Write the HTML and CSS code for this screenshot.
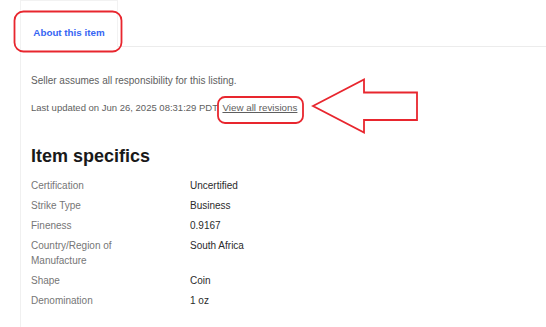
FILE: index.html
```html
<!DOCTYPE html>
<html>
	<head>
		<meta charset="UTF-8">
		<title>About this item</title>
		<link rel="stylesheet" href="styles.css">
	</head>
	<body>
		<div class="page">
			<div class="tabs">
				<div class="tab tab-active">About this item</div>
				<div class="tab-rest"></div>
			</div>
			<div class="panel">
				<p class="note">Seller assumes all responsibility for this listing.</p>
				<p class="note updated">Last updated on Jun 26, 2025 08:31:29 PDT <a href="javascript:void(0)">View all revisions</a></p>

				<h2 class="specs-title">Item specifics</h2>
				<dl class="specs">
					<div class="spec-row"><dt>Certification</dt><dd>Uncertified</dd></div>
					<div class="spec-row"><dt>Strike Type</dt><dd>Business</dd></div>
					<div class="spec-row"><dt>Fineness</dt><dd>0.9167</dd></div>
					<div class="spec-row"><dt>Country/Region of Manufacture</dt><dd>South Africa</dd></div>
					<div class="spec-row"><dt>Shape</dt><dd>Coin</dd></div>
					<div class="spec-row"><dt>Denomination</dt><dd>1 oz</dd></div>
				</dl>
			</div>

			<!-- red markup drawn over the screenshot -->
			<svg class="marks" width="546" height="327" viewBox="0 0 546 327">
				<rect x="14.5" y="11.5" width="107" height="40" rx="9" ry="9" />
				<rect x="218" y="97" width="85" height="26" rx="7" ry="7" />
				<polygon points="313,106 364,79.5 364,92.5 417,92.5 417,120 364,120 364,132.5" />
			</svg>
		</div>
	</body>
</html>
```

FILE: styles.css
```css
* {
	margin: 0;
	padding: 0;
	box-sizing: border-box;
}

body {
	background: #fff;
	font-family: "Liberation Sans", Arial, sans-serif;
	color: #191919;
}

.page {
	position: relative;
	width: 546px;
	height: 327px;
	overflow: hidden;
}

.tabs {
	display: flex;
	height: 47px;
	padding-left: 20px;
}

.tab {
	width: 98px;
	padding-top: 26px;
	text-align: center;
	font-size: 9.8px;
	font-weight: bold;
	color: #3665f3;
	border: 1px solid #f2f2f2;
	border-bottom: none;
}

.tab-rest {
	flex: 1;
	border-bottom: 1px solid #ececec;
}

.panel {
	margin-left: 20px;
	height: 280px;
	border-left: 1px solid #f0f0f0;
	padding: 28px 0 0 10px;
}

.note {
	font-size: 10px;
	line-height: 12px;
	color: #5e5e5e;
}

.updated {
	margin-top: 15px;
	font-size: 9.5px;
}

.updated a {
	margin-left: 2px;
	font-size: 9.8px;
	color: #5e5e5e;
	text-decoration: underline;
}

.specs-title {
	margin-top: 31px;
	font-size: 18px;
	line-height: 22px;
	font-weight: bold;
	color: #191919;
}

.specs {
	margin-top: 11px;
	display: flex;
	flex-direction: column;
	gap: 5px;
}

.spec-row {
	display: flex;
	font-size: 10px;
	line-height: 15px;
}

.spec-row dt {
	width: 130px;
	margin-right: 29px;
	color: #767676;
}

.spec-row dd {
	color: #2b2b2b;
}

.marks {
	position: absolute;
	left: 0;
	top: 0;
	pointer-events: none;
}

.marks rect,
.marks polygon {
	fill: none;
	stroke: #e8262e;
	stroke-width: 1.8;
}
```
